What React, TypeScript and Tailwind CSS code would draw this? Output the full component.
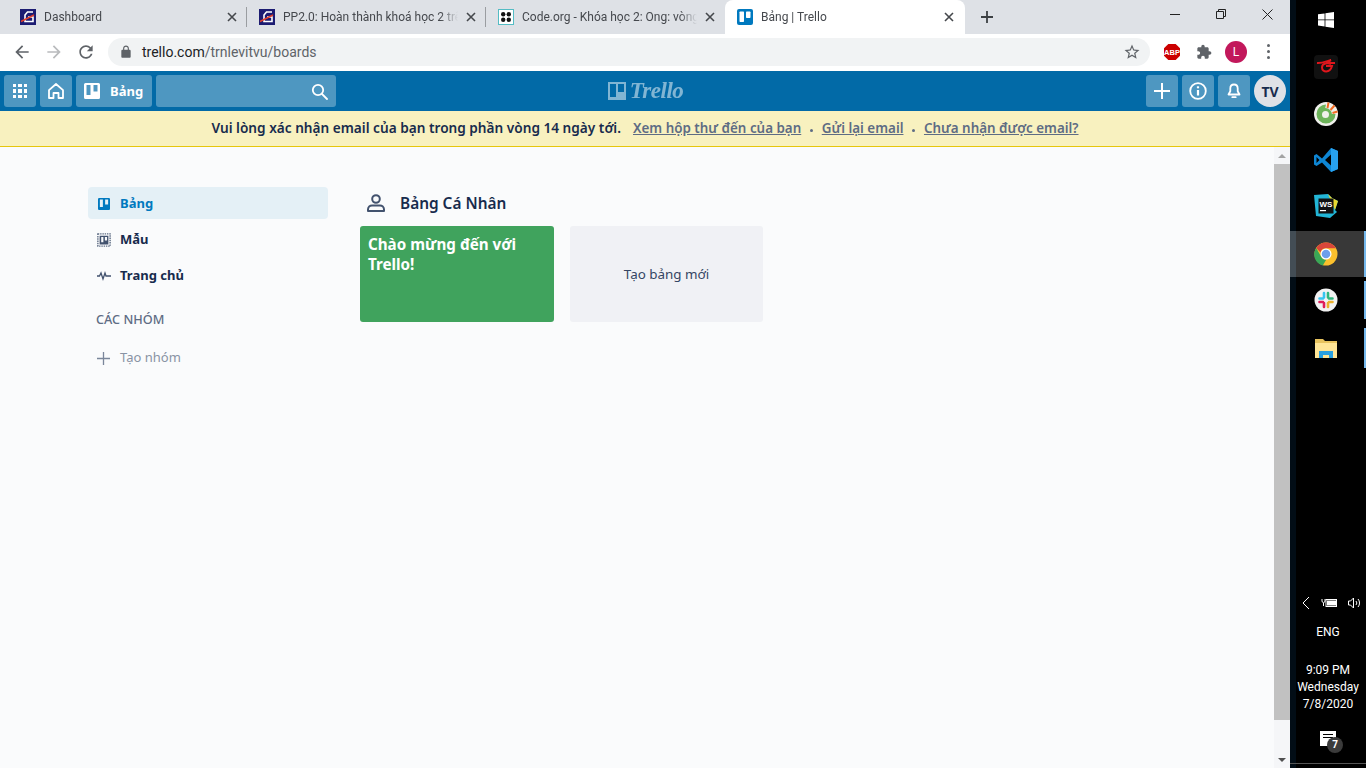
import type { ReactNode } from "react";

const pageFont = "font-['Noto_Sans','Open_Sans',sans-serif]";
const chromeFont = "font-['Roboto','Noto_Sans',sans-serif]";

function Favicon({ kind }: { kind: "garena" | "code" | "trello" }) {
  if (kind === "garena") {
    return (
      <svg width="16" height="16" viewBox="0 0 16 16" className="shrink-0">
        <rect width="16" height="16" fill="#1c1c72" />
        <path d="M13 3H7.5L5 6v6.5h8V8H8" fill="none" stroke="#fff" strokeWidth="1.6" />
        <path d="M1 12.5L14 6" stroke="#e2402c" strokeWidth="1.4" />
      </svg>
    );
  }
  if (kind === "code") {
    return (
      <svg width="16" height="16" viewBox="0 0 16 16" className="shrink-0">
        <rect x="0.5" y="0.5" width="15" height="15" fill="#fff" stroke="#54bcc4" />
        <circle cx="5.2" cy="5.2" r="2.2" fill="#111" />
        <circle cx="10.8" cy="5.2" r="2.2" fill="#111" />
        <circle cx="5.2" cy="10.8" r="2.2" fill="#111" />
        <circle cx="10.8" cy="10.8" r="2.2" fill="#111" />
      </svg>
    );
  }
  return (
    <svg width="16" height="16" viewBox="0 0 16 16" className="shrink-0">
      <rect width="16" height="16" rx="2" fill="#0079bf" />
      <rect x="2.5" y="2.5" width="4.5" height="10.5" rx="0.7" fill="#fff" />
      <rect x="9" y="2.5" width="4.5" height="6.5" rx="0.7" fill="#fff" />
    </svg>
  );
}

function TabClose() {
  return (
    <svg width="10" height="10" viewBox="0 0 10 10" className="shrink-0 text-[#45484c]">
      <path d="M1 1l8 8M9 1l-8 8" stroke="currentColor" strokeWidth="1.6" />
    </svg>
  );
}

function Tab({ title, icon, active, divider }: { title: string; icon: "garena" | "code" | "trello"; active?: boolean; divider?: boolean }) {
  return (
    <div
      className={
        active
          ? "flex h-[34px] w-[240px] shrink-0 items-center gap-2 rounded-t-lg bg-white pl-3 pr-[11px]"
          : "flex h-[34px] w-[239px] shrink-0 items-center gap-2 pl-3"
      }
    >
      <Favicon kind={icon} />
      <span className="min-w-0 flex-1 overflow-hidden whitespace-nowrap text-[12px] leading-4 text-[#45484d] [mask-image:linear-gradient(to_right,#000_90%,transparent)]">
        {title}
      </span>
      <TabClose />
      {divider ? <span className="ml-px h-5 w-px shrink-0 bg-[#9a9da1]" /> : !active && <span className="w-[2px] shrink-0" />}
    </div>
  );
}

function MaterialIcon({ d, size = 20, color = "#5f6368" }: { d: string; size?: number; color?: string }) {
  return (
    <svg width={size} height={size} viewBox="0 0 24 24" fill={color} className="shrink-0">
      <path d={d} />
    </svg>
  );
}

function TabStrip() {
  return (
    <div className={`flex h-[34px] items-start bg-[#dee1e6] pl-2 ${chromeFont}`}>
      <Tab title="Dashboard" icon="garena" divider />
      <Tab title="PP2.0: Hoàn thành khoá học 2 trên Code.org" icon="garena" divider />
      <Tab title="Code.org - Khóa học 2: Ong: vòng lặp" icon="code" />
      <Tab title="Bảng | Trello" icon="trello" active />
      <div className="ml-[15px] flex h-[34px] w-[14px] shrink-0 items-center justify-center">
        <svg width="14" height="14" viewBox="0 0 14 14">
          <path d="M7 1v12M1 7h12" stroke="#3c4043" strokeWidth="1.8" />
        </svg>
      </div>
      <div className="ml-[158px] flex h-[28px] w-[46px] shrink-0 items-center justify-center">
        <span className="h-px w-[10px] bg-[#222]" />
      </div>
      <div className="flex h-[28px] w-[46px] shrink-0 items-center justify-center">
        <svg width="10" height="10" viewBox="0 0 10 10" fill="none" stroke="#222">
          <path d="M.5 2.5h7v7h-7z" />
          <path d="M2.5 2.5v-2h7v7h-2" />
        </svg>
      </div>
      <div className="flex h-[28px] w-[46px] shrink-0 items-center justify-center">
        <svg width="11" height="11" viewBox="0 0 11 11" stroke="#222">
          <path d="M.5.5l10 10M10.5.5l-10 10" />
        </svg>
      </div>
    </div>
  );
}

function ChromeToolbar() {
  return (
    <div className={`flex h-[37px] items-center bg-white pb-[2px] pl-3 pr-3 ${chromeFont}`}>
      <MaterialIcon d="M20 11H7.83l5.59-5.59L12 4l-8 8 8 8 1.41-1.41L7.83 13H20v-2z" />
      <div className="ml-3">
        <MaterialIcon d="M12 4l-1.41 1.41L16.17 11H4v2h12.17l-5.58 5.59L12 20l8-8z" color="#b9bbbd" />
      </div>
      <div className="ml-3">
        <MaterialIcon d="M17.65 6.35C16.2 4.9 14.21 4 12 4c-4.42 0-7.99 3.58-7.99 8s3.57 8 7.99 8c3.73 0 6.84-2.55 7.73-6h-2.08c-.82 2.33-3.04 4-5.65 4-3.31 0-6-2.69-6-6s2.69-6 6-6c1.66 0 3.14.69 4.22 1.78L13 11h7V4l-2.35 2.35z" />
      </div>
      <div className="ml-3 flex h-7 w-[1042px] shrink-0 items-center rounded-full bg-[#f1f3f4] pl-[11px] pr-[9px]">
        <MaterialIcon size={14} d="M18 8h-1V6c0-2.76-2.24-5-5-5S7 3.24 7 6v2H6c-1.1 0-2 .9-2 2v10c0 1.1.9 2 2 2h12c1.1 0 2-.9 2-2V10c0-1.1-.9-2-2-2zM9 6c0-1.66 1.34-3 3-3s3 1.34 3 3v2H9V6z" />
        <span className="ml-[9px] flex-1 text-[14px] leading-4 text-[#5f6368]">
          <span className="text-[#202124]">trello.com</span>/trnlevitvu/boards
        </span>
        <MaterialIcon size={18} d="M22 9.24l-7.19-.62L12 2 9.19 8.63 2 9.24l5.46 4.73L5.82 21 12 17.27 18.18 21l-1.63-7.03L22 9.24zM12 15.4l-3.76 2.27 1-4.28-3.32-2.88 4.38-.38L12 6.1l1.71 4.04 4.38.38-3.32 2.88 1 4.28L12 15.4z" />
      </div>
      <svg width="18" height="18" viewBox="0 0 18 18" className="ml-[13px] shrink-0">
        <path d="M5.3 1h7.4L17 5.3v7.4L12.7 17H5.3L1 12.7V5.3z" fill="#c00" />
        <text x="9" y="11.8" textAnchor="middle" fontSize="7.5" fontWeight="700" fill="#fff" fontFamily="Liberation Sans, sans-serif">ABP</text>
      </svg>
      <div className="ml-[15px]">
        <MaterialIcon size={16} d="M20.5 11H19V7c0-1.1-.9-2-2-2h-4V3.5C13 2.12 11.88 1 10.5 1S8 2.12 8 3.5V5H4c-1.1 0-1.99.9-1.99 2v3.8H3.5c1.49 0 2.7 1.21 2.7 2.7s-1.21 2.7-2.7 2.7H2V20c0 1.1.9 2 2 2h3.8v-1.5c0-1.49 1.21-2.7 2.7-2.7 1.49 0 2.7 1.21 2.7 2.7V22H17c1.1 0 2-.9 2-2v-4h1.5c1.38 0 2.5-1.12 2.5-2.5S21.88 11 20.5 11z" />
      </div>
      <div className="ml-[13px] flex h-[22px] w-[22px] shrink-0 items-center justify-center rounded-full bg-[#c2185b] text-[12px] text-white">L</div>
      <div className="ml-[20px] flex flex-col gap-[3px]">
        <span className="h-[3px] w-[3px] rounded-full bg-[#5f6368]" />
        <span className="h-[3px] w-[3px] rounded-full bg-[#5f6368]" />
        <span className="h-[3px] w-[3px] rounded-full bg-[#5f6368]" />
      </div>
    </div>
  );
}

function HeaderButton({ children, className = "w-8" }: { children: ReactNode; className?: string }) {
  return <div className={`flex h-8 items-center justify-center rounded-[3px] bg-white/30 ${className}`}>{children}</div>;
}

function TrelloHeader() {
  return (
    <div className="flex h-10 items-center bg-[#026aa7] px-1">
      <div className="flex w-[332px] gap-1">
        <HeaderButton>
          <div className="grid grid-cols-3 gap-[2px]">
            {Array.from({ length: 9 }).map((_, i) => (
              <span key={i} className="h-[3.5px] w-[3.5px] bg-white" />
            ))}
          </div>
        </HeaderButton>
        <HeaderButton>
          <svg width="18" height="18" viewBox="0 0 18 18" fill="none" stroke="#fff" strokeWidth="1.8">
            <path d="M2 8.2L9 2l7 6.2V16h-4.5v-5h-5v5H2z" strokeLinejoin="round" />
          </svg>
        </HeaderButton>
        <HeaderButton className="w-[76px] justify-start pl-2">
          <svg width="16" height="16" viewBox="0 0 16 16" className="shrink-0">
            <path fillRule="evenodd" fill="#fff" d="M1.5 0h13A1.5 1.5 0 0 1 16 1.500v13a1.500 1.500 0 0 1-1.500 1.500h-13A1.500 1.500 0 0 1 0 14.500v-13A1.500 1.500 0 0 1 1.500 0zM2.500 2v10h4V2zM9.500 2v6.500h4V2z" />
          </svg>
          <span className="ml-[10px] text-[13px] font-bold leading-4 text-white">Bảng</span>
        </HeaderButton>
        <HeaderButton className="w-[180px] justify-end pr-2">
          <svg width="17" height="17" viewBox="0 0 17 17" fill="none" stroke="#fff" strokeWidth="1.8">
            <circle cx="7" cy="7" r="5.2" />
            <path d="M11 11l5 5" strokeLinecap="round" />
          </svg>
        </HeaderButton>
      </div>
      <div className="flex flex-1 items-center justify-center pr-[191px] opacity-50">
        <svg width="18" height="18" viewBox="0 0 18 18" className="shrink-0">
          <path fillRule="evenodd" fill="#fff" d="M0 0h18v18H0zM2 2v13h6V2zM10 2v8h6V2z" />
        </svg>
        <span className="ml-[4px] font-['Liberation_Serif',serif] text-[23px] font-bold italic leading-6 tracking-[-0.5px] text-white">Trello</span>
      </div>
      <div className="flex gap-1">
        <HeaderButton>
          <svg width="16" height="16" viewBox="0 0 16 16" stroke="#fff" strokeWidth="2">
            <path d="M8 0v16M0 8h16" />
          </svg>
        </HeaderButton>
        <HeaderButton>
          <svg width="18" height="18" viewBox="0 0 18 18" fill="none" stroke="#fff" strokeWidth="1.8">
            <circle cx="9" cy="9" r="7.800" />
            <path d="M9 8v5.500" strokeWidth="2.200" />
            <path d="M9 4.300v2" strokeWidth="2.200" />
          </svg>
        </HeaderButton>
        <HeaderButton>
          <svg width="16" height="16" viewBox="0 0 16 16" fill="none" stroke="#fff" strokeWidth="1.800">
            <path d="M8 1.500c-2.500 0-3.700 1.800-3.700 4v2.800L2.500 11.500h11L11.700 8.300V5.500c0-2.200-1.200-4-3.700-4z" strokeLinejoin="round" />
            <path d="M6.300 14.200h3.400" strokeLinecap="round" />
          </svg>
        </HeaderButton>
        <div className="flex h-8 w-8 items-center justify-center rounded-full bg-[#dfe1e6] text-[14px] font-bold text-[#172b4d]">TV</div>
      </div>
    </div>
  );
}

function BannerDot() {
  return <span className="mx-[9px] mt-[4px] h-[2.5px] w-[2.5px] rounded-full bg-[#5e6c84]" />;
}

function VerifyBanner() {
  const link = "text-[13.4px] text-[#5e6c84] underline";
  return (
    <div className="flex h-9 items-center justify-center border-b border-[#e6c60d] bg-[#f8f1bf] text-[13.65px] font-semibold text-[#172b4d]">
      <span>Vui lòng xác nhận email của bạn trong phần vòng 14 ngày tới.</span>
      <span className={`ml-3 ${link}`}>Xem hộp thư đến của bạn</span>
      <BannerDot />
      <span className={link}>Gửi lại email</span>
      <BannerDot />
      <span className={link}>Chưa nhận được email?</span>
    </div>
  );
}

function Sidebar() {
  return (
    <div className="ml-[88px] mt-10 w-[240px] shrink-0 text-[13px] font-bold text-[#172b4d]">
      <div className="flex h-8 items-center rounded bg-[#e4f0f6] pl-[10px] pt-px text-[#0079bf]">
        <svg width="12" height="12" viewBox="0 0 16 16" className="shrink-0">
          <path fillRule="evenodd" fill="#0079bf" d="M1.500 0h13A1.500 1.500 0 0 1 16 1.500v13a1.500 1.500 0 0 1-1.500 1.500h-13A1.500 1.500 0 0 1 0 14.500v-13A1.500 1.500 0 0 1 1.500 0zM2.500 2v10h4V2zM9.500 2v6.500h4V2z" />
        </svg>
        <span className="ml-[10px]">Bảng</span>
      </div>
      <div className="mt-1 flex h-8 items-center pl-[9px] pt-px">
        <svg width="14" height="14" viewBox="0 0 16 16" className="shrink-0">
          <path fill="none" stroke="#5e6c84" strokeWidth="1.600" strokeDasharray="1.600 1" d="M1 1h14v14H1z" />
          <path fillRule="evenodd" fill="#42526e" d="M3 3h10v10H3zM4.800 4.500v6h2.500v-6zM9 4.500v4h2.500v-4z" />
        </svg>
        <span className="ml-[9px]">Mẫu</span>
      </div>
      <div className="mt-1 flex h-8 items-center pl-[9px] pt-px">
        <svg width="14" height="13" viewBox="0 0 14 13" fill="none" stroke="#42526e" strokeWidth="1.300" className="shrink-0">
          <path d="M0 7h2.500l1.500-3 2 6 2-6 1 3H14" />
        </svg>
        <span className="ml-[9px]">Trang chủ</span>
      </div>
      <div className="mt-[17px] flex h-6 items-center pl-2 text-[12.7px] font-medium text-[#5e6c84]">CÁC NHÓM</div>
      <div className="mt-[10px] flex h-8 items-center pl-[9px] text-[13px] font-normal text-[#8993a4]">
        <svg width="13" height="13" viewBox="0 0 13 13" stroke="#7a869a" strokeWidth="1.300" className="shrink-0">
          <path d="M6.500 0v13M0 6.500h13" />
        </svg>
        <span className="ml-[10px]">Tạo nhóm</span>
      </div>
    </div>
  );
}

function BoardsArea() {
  return (
    <div className="ml-8 mt-10 flex-1">
      <div className="flex h-8 items-center pl-[7px]">
        <svg width="18" height="18" viewBox="0 0 18 18" fill="none" stroke="#42526e" strokeWidth="2" className="shrink-0">
          <circle cx="9" cy="5" r="3.800" />
          <path d="M1 17v-1.500c0-2.500 2-4 4-4h8c2 0 4 1.500 4 4V17z" strokeLinejoin="round" />
        </svg>
        <span className="ml-[15px] mt-[2px] text-[15.4px] font-semibold text-[#172b4d]">Bảng Cá Nhân</span>
      </div>
      <div className="mt-[7px] flex gap-4">
        <div className="h-24 w-[194px] rounded-[3px] bg-[#40a35d] px-2 py-2 text-[15.2px] font-bold leading-5 text-white">
          Chào mừng đến với Trello!
        </div>
        <div className="flex h-24 w-[193px] items-center justify-center rounded-[3px] bg-[#f0f1f5] pt-px text-[13.400px] text-[#344563]">
          Tạo bảng mới
        </div>
      </div>
    </div>
  );
}

function Scrollbar() {
  return (
    <div className="flex w-4 shrink-0 flex-col bg-[#f5f6f8]">
      <div className="flex h-[17px] items-center justify-center">
        <span className="border-x-[4px] border-b-[4px] border-x-transparent border-b-[#a3a3a3]" />
      </div>
      <div className="h-[556px] bg-[#c1c1c1]" />
      <div className="flex-1" />
      <div className="flex h-[17px] items-center justify-center">
        <span className="border-x-[4px] border-t-[4px] border-x-transparent border-t-[#505050]" />
      </div>
    </div>
  );
}

function TaskTile({ children, className = "h-[46px]", active, pin }: { children: ReactNode; className?: string; active?: boolean; pin?: boolean }) {
  return (
    <div className={`flex w-full shrink-0 items-center ${active ? "bg-[linear-gradient(to_right,#434d55_6px,#383838_6px)]" : ""} ${className}`}>
      <div className="flex flex-1 justify-center">{children}</div>
      <span className="w-[2px]" />
      <span className={`h-full w-[2px] ${pin ? "bg-[#76b9ed]" : ""}`} />
    </div>
  );
}

function Taskbar() {
  return (
    <div className="flex w-[76px] shrink-0 flex-col bg-[linear-gradient(to_right,#020d16_6px,#000_6px)]">
      <TaskTile className="h-[44px] pb-[4px]">
        <svg width="16" height="16" viewBox="0 0 16 16" fill="#fff">
          <path d="M0 2.300L6.600 1.400v6.100H0zM7.400 1.300L16 0v7.500H7.400zM0 8.300h6.600v6.200L0 13.600zM7.400 8.300H16V16l-8.600-1.300z" />
        </svg>
      </TaskTile>
      <TaskTile>
        <div className="flex h-6 w-6 items-center justify-center rounded-sm bg-[#111]">
          <svg width="20" height="16" viewBox="0 0 20 16" fill="none" stroke="#e0161c" strokeWidth="2">
            <path d="M1 4c5 .5 10-2 14-3-2 1-3 2-4 3l8 0" />
            <path d="M15 5c-3-1.500-9-1-9 3.500 0 5 8 6 10-1.500h-6" />
          </svg>
        </div>
      </TaskTile>
      <TaskTile className="h-[47px]">
        <svg width="24" height="24" viewBox="0 0 24 24">
          <circle cx="12" cy="12" r="12" fill="#f0f0ec" />
          <path d="M12 2.500a9.500 9.500 0 1 0 9.500 9.500l-4.500 0a5 5 0 1 1-6-5z" fill="#6db35a" />
          <circle cx="11.500" cy="12.500" r="5" fill="none" stroke="#6db35a" strokeWidth="3" />
          <path d="M13.500 6l1-5.500M16.500 8l4-4.500M18.500 11l5-1.500" stroke="#f26b21" strokeWidth="2" />
        </svg>
      </TaskTile>
      <TaskTile>
        <svg width="24" height="24" viewBox="0 0 24 24">
          <path d="M17 0l7 3v18l-7 3-9-9.500L2.500 18 0 16.500V7.500L2.500 6 8 10.500z" fill="#0e86d4" />
          <path d="M17 6.500L11 12l6 5.500zM2.500 9v6l3-3z" fill="#000" />
          <path d="M17 0l7 3v18l-7 3z" fill="#27a0ee" />
        </svg>
      </TaskTile>
      <TaskTile>
        <svg width="24" height="24" viewBox="0 0 24 24">
          <path d="M0 1l14-1 4 4 6 3-3 9 2 2-7 6L2 22z" fill="#22b5d6" />
          <path d="M14 0l4 4 6 3-3 9z" fill="#e8d730" />
          <rect x="4.500" y="4.500" width="15" height="15" fill="#111" />
          <text x="12" y="12.500" textAnchor="middle" fontSize="8" fontWeight="700" fill="#fff" fontFamily="Liberation Sans, sans-serif">WS</text>
          <rect x="6" y="16" width="6" height="1.200" fill="#fff" />
        </svg>
      </TaskTile>
      <TaskTile active pin className="mt-[2px] h-[46px]">
        <svg width="24" height="24" viewBox="0 0 24 24">
          <circle cx="12" cy="12" r="11.500" fill="#fbc02d" />
          <path d="M12 .5a11.500 11.500 0 0 1 10 5.800H12a5.700 5.700 0 0 0-5.500 4.200L2.200 6A11.500 11.500 0 0 1 12 .5z" fill="#d9463a" />
          <path d="M2.200 6l5 8.800a5.700 5.700 0 0 0 5 3l-3.400 5.800A11.500 11.500 0 0 1 2.200 6z" fill="#3aa757" />
          <circle cx="12" cy="12" r="5.500" fill="#fff" />
          <circle cx="12" cy="12" r="4.300" fill="#6d9eeb" />
        </svg>
      </TaskTile>
      <TaskTile pin className="mt-[4px] h-[38px]">
        <svg width="24" height="24" viewBox="0 0 24 24">
          <circle cx="12" cy="12" r="11.500" fill="#f2f2f2" />
          <path d="M10 5v4.500M5.500 10.500H9" stroke="#36c5f0" strokeWidth="2.600" strokeLinecap="round" />
          <path d="M14 5v4.500M15 10.500h3.500" stroke="#2eb67d" strokeWidth="2.600" strokeLinecap="round" />
          <path d="M14 15v4M15 14h3.500" stroke="#ecb22e" strokeWidth="2.600" strokeLinecap="round" />
          <path d="M10 15v4M5.500 14H9" stroke="#e01e5a" strokeWidth="2.600" strokeLinecap="round" />
        </svg>
      </TaskTile>
      <TaskTile pin className="mt-[9px] h-[40px]">
        <svg width="22" height="20" viewBox="0 0 22 20">
          <path d="M0 1h8l2 2h12v17H0z" fill="#e8c35e" />
          <path d="M0 5h22v15H0z" fill="#ffe596" />
          <path d="M4 20v-7h14v7h-4v-3H8v3z" fill="#29a0e0" />
        </svg>
      </TaskTile>
      <div className="flex-1" />
      <div className={`flex flex-col items-center text-[12px] leading-4 text-white ${chromeFont}`}>
        <div className="ml-[6px] flex h-[18px] w-[60px] items-center justify-between">
          <svg width="9" height="14" viewBox="0 0 9 14" fill="none" stroke="#fff">
            <path d="M8 1L2 7l6 6" />
          </svg>
          <svg width="16" height="10" viewBox="0 0 16 10" fill="none" stroke="#fff">
            <path d="M1 1v2a1.500 1.500 0 0 0 3 0V1M2.500 5v3" />
            <rect x="5" y="1.500" width="10.500" height="7" />
            <rect x="6.500" y="3" width="8" height="4" fill="#fff" />
          </svg>
          <svg width="13" height="14" viewBox="0 0 13 14" fill="none" stroke="#fff">
            <path d="M.5 5v4h2l3 3V2l-3 3zM8 5a3 3 0 0 1 0 4M10 3a6 6 0 0 1 0 8" />
          </svg>
        </div>
        <span className="mt-[12px]">ENG</span>
        <span className="mt-[22px]">9:09 PM</span>
        <span className="mt-[1px]">Wednesday</span>
        <span className="mt-[1px]">7/8/2020</span>
        <div className="relative mb-[17px] mt-[19px] h-[15px] w-[16px] bg-white">
          <span className="mx-[3px] mt-[3px] block h-px bg-black" />
          <span className="mx-[3px] mt-[2px] block h-px bg-black" />
          <span className="absolute -bottom-[7px] left-[7px] flex h-4 w-4 items-center justify-center rounded-full bg-[#3b3b3b] text-[10px] font-bold leading-none text-white">7</span>
        </div>
      </div>
      <div className="h-px bg-[#555]" />
      <div className="h-1" />
    </div>
  );
}

export default function App() {
  return (
    <div className={`flex h-[768px] w-[1366px] overflow-hidden ${pageFont}`}>
      <div className="flex w-[1290px] shrink-0 flex-col">
        <TabStrip />
        <ChromeToolbar />
        <TrelloHeader />
        <VerifyBanner />
        <div className="flex min-h-0 flex-1 bg-[#fafbfc]">
          <Sidebar />
          <BoardsArea />
          <Scrollbar />
        </div>
      </div>
      <Taskbar />
    </div>
  );
}
